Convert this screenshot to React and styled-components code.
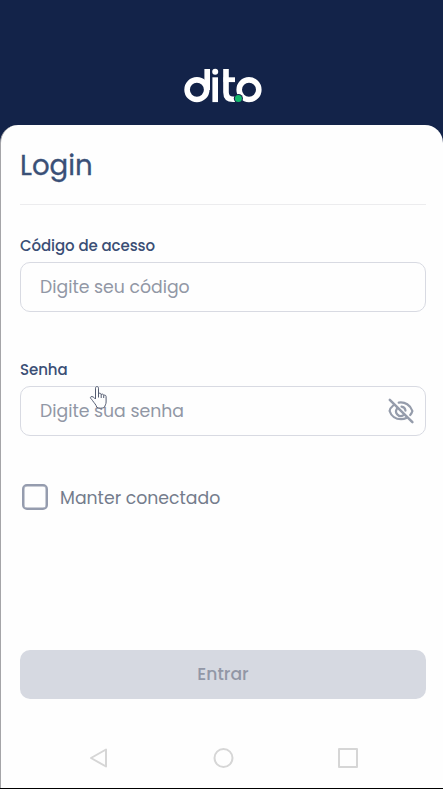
import React, { useState } from 'react'
import styled, { createGlobalStyle } from 'styled-components'

const GlobalStyle = createGlobalStyle`
  * {
    box-sizing: border-box;
  }

  body {
    margin: 0;
    overflow: hidden;
    font-family: Poppins, Inter, sans-serif;
  }
`

const Screen = styled.div`
  position: relative;
  display: flex;
  flex-direction: column;
  width: 443px;
  height: 789px;
  background: #132349;
  border-bottom: 1px solid #000;
`

const Header = styled.header`
  height: 125px;
  padding: 68px 0 0 184px;
`

const Card = styled.main`
  display: flex;
  flex-direction: column;
  flex-grow: 1;
  padding: 0 17px 0 19px;
  background: #fefefe;
  border-left: 1px solid #a5a5a8;
  border-radius: 18px 18px 0 0;
`

const Title = styled.h1`
  height: 80px;
  margin: 0;
  padding-top: 21px;
  border-bottom: 1px solid #ececee;
  color: #3a5077;
  font-size: 27.6px;
  font-weight: 400;
  line-height: 40px;
  -webkit-text-stroke: 0.3px #3a5077;
`

const Form = styled.form`
  display: flex;
  flex-direction: column;
`

const Field = styled.div`
  display: flex;
  flex-direction: column;
  height: 94px;
  margin-top: 30px;
`

const Label = styled.label`
  height: 27px;
  color: #3a4e75;
  font-size: 15px;
  font-weight: 500;
  line-height: 22px;
  letter-spacing: -0.08px;
`

const InputBox = styled.div`
  display: flex;
  align-items: center;
  height: 50px;
  padding: 0 10px 0 19px;
  border: 1px solid #d8dae2;
  border-radius: 10px;
`

const Input = styled.input`
  flex-grow: 1;
  min-width: 0;
  padding: 0 0 1px;
  border: 0;
  outline: none;
  background: transparent;
  color: #30466f;
  font-family: inherit;
  font-size: 17.3px;

  &::placeholder {
    color: #9197a5;
    opacity: 1;
  }
`

const IconButton = styled.button`
  display: flex;
  padding: 0;
  border: 0;
  background: none;
`

const Remember = styled.label`
  display: flex;
  align-items: center;
  gap: 12px;
  height: 26px;
  margin: 31px 0 0 2px;
  color: #747c8c;
  font-size: 17.3px;
`

const RememberText = styled.span`
  padding-top: 2px;
`

const Checkbox = styled.input`
  appearance: none;
  width: 26px;
  height: 26px;
  margin: 0;
  border: 2px solid #959cae;
  border-radius: 5px;
  box-shadow: inset 0 0 0 0.5px #959cae;
`

const Submit = styled.button`
  height: 49px;
  margin-top: 140px;
  padding: 0 0 1px;
  border: 0;
  border-radius: 10px;
  background: #d6d9e1;
  color: #9297a6;
  font-family: inherit;
  font-size: 17.2px;
  font-weight: 500;
`

const NavBar = styled.nav`
  display: flex;
  justify-content: space-between;
  padding: 48px 67px 0 68px;
`

const Pointer = styled.svg`
  position: absolute;
  top: 385px;
  left: 89px;
`

const Logo = () => (
  <svg width="80" height="36" viewBox="0 0 80 36" fill="none" role="img" aria-label="dito">
    <g stroke="#fff" strokeWidth="5.6">
      <circle cx="12.9" cy="21.7" r="9.8" />
      <path d="M23.2 1v21" />
      <path d="M31.2 9.3v24.8" />
      <path d="M42 1v23.2q0 7 7 7H51" />
      <path d="M39.5 11.7h11.5" strokeWidth="4.8" />
      <circle cx="65" cy="21.7" r="9.8" />
    </g>
    <circle cx="31.2" cy="3.7" r="3" fill="#fff" />
    <circle cx="54.4" cy="30.6" r="4.6" fill="#132349" />
    <circle cx="54.4" cy="30.6" r="3.5" fill="#12b76a" />
  </svg>
)

const EyeOff = () => (
  <svg width="28" height="28" viewBox="0 0 28 28" fill="none" stroke="#959cab" strokeWidth="2.2" strokeLinecap="round">
    <path d="M6.2 8.5C4 10.2 2.9 12.3 2.6 14c1.6 5.3 6.3 8.2 11.4 8.2 2 0 3.8-.4 5.3-1.2" />
    <path d="M11.7 5.6c6.4-1 11.8 2.6 13.7 8.4-.4 1.5-1.2 2.9-2.2 4" />
    <path d="M10 11.6a4.7 4.7 0 0 0 6.5 6.6" />
    <path d="M14.5 9.7a4.6 4.6 0 0 1 4 4" />
    <path d="M2.8 2.8l22.6 22.4" strokeWidth="2.5" />
  </svg>
)

const Hand = () => (
  <Pointer width="20" height="26" viewBox="0 0 20 26" fill="#fefefe" stroke="#555d72" strokeLinejoin="round">
    <path d="M6.5 14V3.2c0-2.2 3-2.2 3 0V9c.3-1.3 2.7-1 2.7.7.4-1 2.5-.8 2.5.8.6-.8 2.4-.4 2.4 1.1V17c0 2.4-1.2 3.4-1.6 5.3-1.3 1.2-6.3 1.2-7.7 0-.7-2.6-2.7-4.4-4.2-6.6-1.5-2.2-3-2.9-1.7-3.9 1.3-.9 3.3.7 4.6 2.2z" />
    <path d="M9.5 8.5v4M12.2 9.5v3.5M14.7 10.5V13" fill="none" />
  </Pointer>
)

export default function App () {
  const [visible, setVisible] = useState(false)

  return (
    <>
      <GlobalStyle />
      <Screen>
        <Header><Logo /></Header>
        <Card>
          <Title>Login</Title>
          <Form onSubmit={event => event.preventDefault()}>
            <Field>
              <Label htmlFor="code">Código de acesso</Label>
              <InputBox>
                <Input id="code" placeholder="Digite seu código" />
              </InputBox>
            </Field>
            <Field>
              <Label htmlFor="password">Senha</Label>
              <InputBox>
                <Input
                  id="password"
                  type={visible ? 'text' : 'password'}
                  placeholder="Digite sua senha"
                />
                <IconButton type="button" onClick={() => setVisible(!visible)}>
                  <EyeOff />
                </IconButton>
              </InputBox>
            </Field>
            <Remember>
              <Checkbox type="checkbox" />
              <RememberText>Manter conectado</RememberText>
            </Remember>
            <Submit type="submit" disabled>Entrar</Submit>
          </Form>
          <NavBar>
            <svg width="22" height="22" viewBox="0 0 22 22" fill="none" stroke="#d6d6d6" strokeWidth="2" strokeLinejoin="round">
              <path d="M18 2.5v17L3 11z" />
            </svg>
            <svg width="22" height="22" viewBox="0 0 22 22" fill="none" stroke="#d6d6d6" strokeWidth="2">
              <circle cx="10.5" cy="11" r="9" />
            </svg>
            <svg width="22" height="22" viewBox="0 0 22 22" fill="none" stroke="#d6d6d6" strokeWidth="2" strokeLinejoin="round">
              <path d="M2 2h18v18H2z" />
            </svg>
          </NavBar>
        </Card>
        <Hand />
      </Screen>
    </>
  )
}
